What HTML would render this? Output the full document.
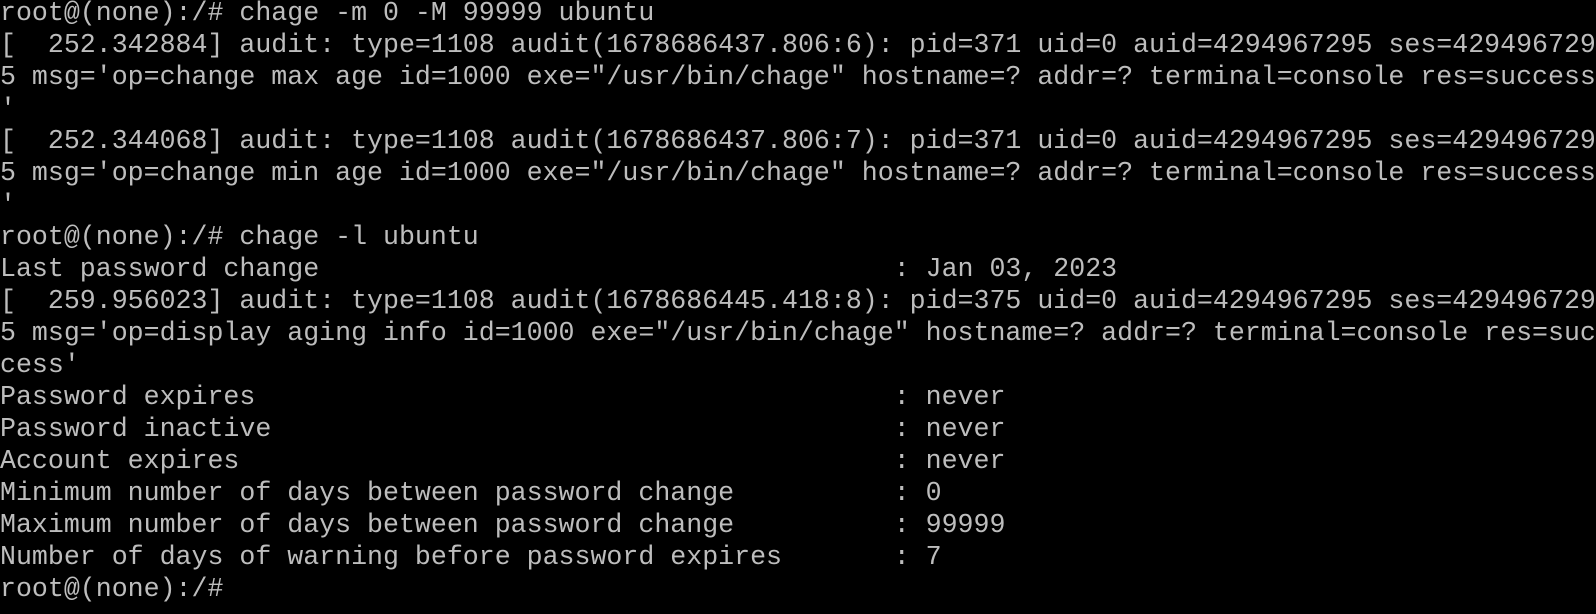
<!DOCTYPE html>
<html><head><meta charset="utf-8"><style>
html,body{margin:0;padding:0;background:#000;width:1596px;height:614px;overflow:hidden}
pre{margin:0;padding:0;position:absolute;left:0;top:-3px;font-family:"Liberation Mono",monospace;font-size:26.6px;line-height:32px;color:#bdbdbd;white-space:pre}
</style></head><body><pre>root@(none):/# chage -m 0 -M 99999 ubuntu
[  252.342884] audit: type=1108 audit(1678686437.806:6): pid=371 uid=0 auid=4294967295 ses=429496729
5 msg='op=change max age id=1000 exe="/usr/bin/chage" hostname=? addr=? terminal=console res=success
'
[  252.344068] audit: type=1108 audit(1678686437.806:7): pid=371 uid=0 auid=4294967295 ses=429496729
5 msg='op=change min age id=1000 exe="/usr/bin/chage" hostname=? addr=? terminal=console res=success
'
root@(none):/# chage -l ubuntu
Last password change                                    : Jan 03, 2023
[  259.956023] audit: type=1108 audit(1678686445.418:8): pid=375 uid=0 auid=4294967295 ses=429496729
5 msg='op=display aging info id=1000 exe="/usr/bin/chage" hostname=? addr=? terminal=console res=suc
cess'
Password expires                                        : never
Password inactive                                       : never
Account expires                                         : never
Minimum number of days between password change          : 0
Maximum number of days between password change          : 99999
Number of days of warning before password expires       : 7
root@(none):/#</pre></body></html>
